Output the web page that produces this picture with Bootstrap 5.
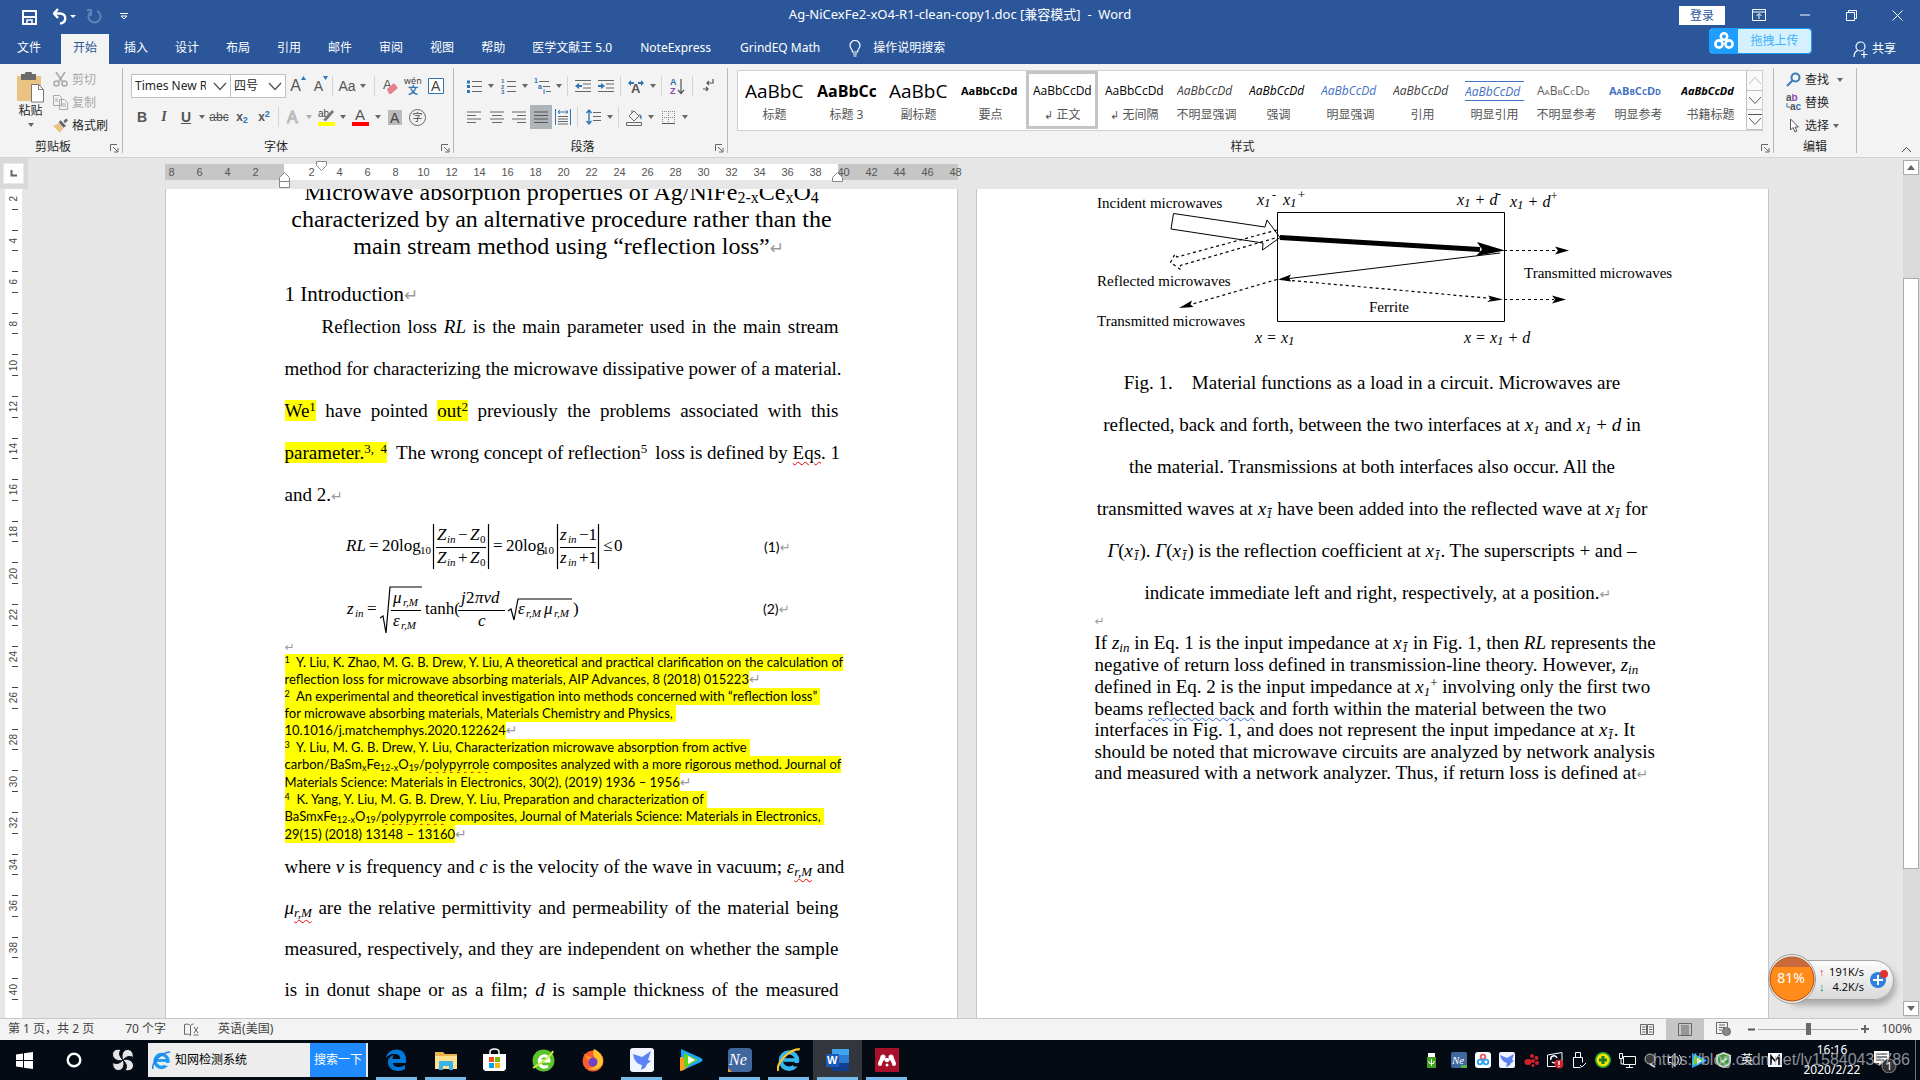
<!DOCTYPE html>
<html lang="zh-CN">
<head>
<meta charset="utf-8">
<meta name="viewport" content="width=device-width, initial-scale=1">
<title>Ag-NiCexFe2-xO4-R1-clean-copy1.doc - Word</title>
<link href="https://cdn.jsdelivr.net/npm/bootstrap@5.3.0/dist/css/bootstrap.min.css" rel="stylesheet">
<style>
:root{--ui:"Noto Sans","Noto Sans CJK SC",sans-serif;--serif:"Liberation Serif","Noto Sans CJK SC",serif;--blue:#2b579a}
body{font:12px/16px var(--ui);color:#262626;background:#e6e6e6}
button,input,select{font:inherit;color:inherit}
button{background:none;border:0;padding:0}
svg{display:block;flex:none}
.top-blue{background:var(--blue);color:#fff}
.titlebar{height:34px}
.qat{padding-left:22px}
.doc-name{left:0;right:0;top:6px;pointer-events:none;font-size:13px}
.login{background:#fff;color:var(--blue);width:46px;height:19px;margin:6px 11px 0 0}
.win-btn{width:46px;height:30px}
.tab-row{height:30px;gap:3px}
.tab-row .tab-btn{height:30px;padding:0 12px 2px}
.tab-row .lat{padding:0 13px 2px}
.tab-row .file-btn{width:58px;padding:0 0 2px 17px;text-align:left}
.tab-row .on{background:#f3f3f3;color:var(--blue)}
.upload{right:108px;top:28px;width:103px;height:26px;border:1px solid #1b9bff;border-radius:4px;background:#d5f1ff;color:#3fb2fb;overflow:hidden;z-index:3}
.upload-logo{width:28px;background:#1e9fff}
.ribbon{height:94px;background:#f3f3f3;border-bottom:1px solid #d2d2d2;padding:4px 0}
.grp{border-right:1px solid #b8b8b8;position:relative;flex:none}
.grp-label{height:16px;line-height:20px;text-align:center}
.launch{position:absolute;right:3px;bottom:0}
.g-clip{width:123px}.g-font{width:331px}.g-para{width:274px}.g-style{flex:1 1 auto;min-width:0}.g-edit{width:83px}.g-end{width:63px}
.trow{height:24px;display:flex;align-items:center}
.g-clip .trow,.g-edit .trow{height:23px}
.row-top{margin:6px 0 7px}
.ic{display:flex;align-items:center;justify-content:center;height:24px;flex:none}
.ic svg{overflow:visible}
.w10{width:10px}.w12{width:12px}.w22{width:22px}.w24{width:24px}.w38{width:38px}
.vs{width:1px;height:20px;background:#d4d4d4;flex:none;margin:0 3px}
.dd::after{content:"";display:block;border:3px solid transparent;border-top:4px solid #666;border-bottom:0}
.dim{color:#a9a9a9}
.sel-wrap{position:relative;border:1px solid #c0c0c0;height:24px;background:#fff}
.sel-wrap+.sel-wrap{border-left:0}
.sel-font{width:100px}.sel-size{width:55px}
.sel-wrap select{appearance:none;border:0;background:transparent;width:100%;height:22px;padding:0 24px 0 3px}
.sel-wrap svg{position:absolute;right:3px;top:7px;pointer-events:none}
.fnt{font-family:"Liberation Sans","Noto Sans CJK SC",sans-serif;color:#555}
.f14{font-size:14px}
.f-ital{font:italic 700 14px "Liberation Serif",serif;color:#555}
.c-acc{color:#2f74b5}
.gallery{border:1px solid #d0d0d0;background:#fff;height:61px;margin:2px 10px 0 9px}
.sty{width:72px;flex:0 0 72px;height:58px;border:3px solid transparent;padding:0 3px 2px 4px;overflow:hidden;text-align:center;color:#555}
.sty.on{border-color:#c5c5c5}
.sty b,.sty i,.sty span{display:block;height:30px;line-height:34px;white-space:nowrap;overflow:hidden;font-family:"Open Sans","Noto Sans",sans-serif;text-align:left;color:#000;font-size:12px;font-weight:400}
.sty b{font-weight:700}.sty .big{font-size:19px}.sty .mid{font-size:16px}.sty b.tight{font-size:11px}
.sty .c-b{color:#4472c4}.sty .c-g{color:#404040}.sty .c-l{color:#5a5a5a}
.sty .ruled{border-top:1px solid #4472c4;border-bottom:1px solid #4472c4;height:20px;line-height:20px;margin:7px 0 3px}
.sty .caps{font-variant:small-caps}
.sty em{display:block;font-style:normal;line-height:21px;margin:0 -6px;white-space:nowrap}
.gal-scroll{width:16px;flex:none}
.gal-scroll button{display:flex;align-items:center;justify-content:center;flex:1;border-left:1px solid #c0c0c0;border-bottom:1px solid #c0c0c0;background:#fafafa}
.work{flex:1 1 auto;min-height:0;position:relative;overflow:hidden}
.vr-col{width:30px;flex:none}
.corner{width:28px;height:31px;background:#d9d9d9;padding:5px 4px 5px 3px;flex:none}
.corner button{width:21px;height:21px;background:#fdfdfd;border:1px solid #e8e8e8}
.vruler{margin-left:5px;width:17px;background:#fff;overflow:hidden;flex:1 1 auto;min-height:0}
.vtrack{margin-top:-11px;height:calc(100% + 3px)}
.vnum{flex:1 1 0;border:0;display:flex;flex-direction:column;align-items:center;justify-content:center;font:10px/10px "Liberation Sans",sans-serif;color:#444;position:relative}
.vnum span{writing-mode:vertical-rl;transform:rotate(180deg)}
.vnum::before,.vnum::after{content:"";position:absolute;left:7px;width:6px;height:1px;background:#444}
.vnum::before{top:10px}.vnum::after{bottom:10px}
.pages{flex:1 1 auto;gap:18px;min-width:0}
.pcol{width:793px;flex:none}
.hr-strip{height:31px;flex:none;position:relative}
.hruler{position:absolute;top:6px;left:0;width:793px;height:16px;background:linear-gradient(90deg,#c6c6c6 119px,#fff 119px,#fff 673px,#c6c6c6 673px)}
.hnums{display:flex;margin-left:-7px;font:11px/16px "Liberation Sans",sans-serif;color:#555}
.hnums span{flex:0 0 28px;text-align:center}
.hm{position:absolute}
.hm-indent{left:151px;top:3px}.hm-left{left:114px;top:14px}.hm-right{left:667px;top:14px}
.paper{flex:1 1 auto;min-height:0;overflow:hidden;background:#fff;border:1px solid #c6c6c6;border-width:0 1px;padding:0 118px;font-family:var(--serif);color:#000}
.paper.first{padding-left:119px}
.scrolled{margin-top:-10px}
.paper sub{font-size:13px}.paper sup{font-size:13px;top:-6px}
.h-title{font-size:24px;line-height:27px;text-align:center;margin:0;font-weight:400}
.h-title sub{font-size:16px;bottom:-3px}
.h-sec{font-size:21px;line-height:24px;margin:22px 0 0;font-weight:400}
.ln{display:block;white-space:nowrap}
.jl{text-align:justify;text-align-last:justify}
.body42,.body41,.body22{font-size:19px;margin:0}
.body42{line-height:42px}.body41{line-height:41px}.body22{line-height:21px}
.body22 .tall{line-height:22px}
.indent{padding-left:37px}
.pm{display:inline-block;width:0;color:#9a9a9a;font:14px/12px "DejaVu Sans",sans-serif;font-style:normal}
.h-title .pm,.h-sec .pm{font-size:17px}
.pm-line{line-height:14px}
.pm-line .pm{font-size:12px}
.yl{background:#ff0}
.notes{font:13px/17px Lato,"Noto Sans",sans-serif;margin-bottom:3px}
.notes .yl{display:inline-block;padding-right:3px}
.notes .n18{line-height:18px}
.notes sup,.notes sub{font-size:9px}
.notes sup{top:-4px}
.sq{text-decoration:underline wavy #e00 1px;text-underline-offset:2px}
.sq-b{text-decoration:underline wavy #2a66e8 1px;text-underline-offset:2px}
.paper .ov{margin-left:-5px;top:-3px;font-size:15px}
.fig-cap{text-align:center}
.vscroll{width:17px;flex:none;background:#dadada;margin-top:2px;padding:0 1px 2px 0}
.vscroll button{height:15px;background:#fff;border:1px solid #ababab;display:flex;align-items:center;justify-content:center}
.vthumb{margin-top:103px;flex:0 0 69%;background:#fff;border:1px solid #ababab}
.status{height:22px;background:#f3f3f3;border-top:1px solid #c8c8c8;color:#444;padding:0 0 1px 8px}
.words{margin-left:31px}.proof{margin:0 18px}
.zoom-out{margin-left:6px}
.view{width:38px;height:21px;display:flex;align-items:center;justify-content:center}
.view.on{background:#c6c6c6}
.zoomer{appearance:none;width:100px;height:16px;background:linear-gradient(#aaa,#aaa) center/100% 1px no-repeat;margin:0 3px}
.zoomer::-webkit-slider-thumb{appearance:none;width:5px;height:12px;background:#6a6a6a}
.task{height:40px;background:#050b14;color:#fff}
.t-search{width:220px;height:34px;background:#ededed;color:#000;margin:0 4px 0 1px}
.t-search input{border:0;background:transparent;width:139px;padding:0 0 0 4px;outline:0}
.t-search button{width:56px;background:#1f8bff;color:#fff;height:34px}
.app{width:49px;height:40px;display:flex;align-items:center;justify-content:center;position:relative}
.app.run::after{content:"";position:absolute;left:4px;right:4px;bottom:0;height:3px;background:#76b9ed}
.app.act{background:#33373d}
.tr{width:24px;display:flex;justify-content:center;align-items:center}
.clock{width:82px;text-align:center;line-height:20px}
.wmark{right:10px;bottom:10px;font:16px/20px "Liberation Sans",sans-serif;color:#b9bcc0;opacity:.75}
.speed{left:1768px;bottom:76px;height:50px;z-index:4;color:#000;padding-top:6px}
.pill{width:104px;height:40px;margin-left:22px;border:1px solid #a5a5a5;border-radius:0 20px 20px 0;background:linear-gradient(#fcfcfc,#d9d9d9);box-shadow:2px 5px 6px #0004;padding:3px 29px 0 0;font:11px/15px "Open Sans","Noto Sans",sans-serif;text-align:right}
.pill .arr{float:left;padding-left:28px;font-weight:700}
.ball{position:absolute;left:0;top:0}
.plus{position:absolute;right:5px;top:15px}
</style>
<script src="https://cdn.jsdelivr.net/npm/bootstrap@5.3.0/dist/js/bootstrap.bundle.min.js"></script>
</head>
<body class="vh-100 overflow-hidden d-flex flex-column m-0">
<header class="top-blue position-relative flex-shrink-0">
  <div class="titlebar d-flex align-items-start justify-content-between">
    <div class="qat d-flex align-items-center pt-2">
      <button aria-label="保存"><svg width="15" height="16" viewBox="0 0 15 16" fill="none" stroke="#fff" stroke-width="2"><path d="M1 2h13v13H1zM2 8h11"/><path d="M5 15v-4h5v4" stroke-width="1.5"/></svg></button>
      <button class="ms-3" aria-label="撤消"><svg width="26" height="17" viewBox="0 0 26 17" fill="none" stroke="#fff" stroke-width="2.4"><path d="M5 1L1 5.500 5 10M1 5.500h6c7 0 7 9 0 10"/><path d="M17 7h6l-3 3z" fill="#fff" stroke="none"/></svg></button>
      <button class="ms-2" aria-label="恢复"><svg width="16" height="17" viewBox="0 0 16 17" fill="none" stroke="#5f82b8" stroke-width="2"><path d="M10 3a6 6 0 1 1-5 0M4 8V2H0"/></svg></button>
      <button class="ms-3" aria-label="自定义快速访问工具栏"><svg width="10" height="9" viewBox="0 0 10 9" fill="none" stroke="#fff"><path d="M1 1.500h8M2 4l3 3 3-3z"/></svg></button>
    </div>
    <div class="doc-name position-absolute text-center">Ag-NiCexFe2-xO4-R1-clean-copy1.doc [兼容模式]&nbsp; -&nbsp; Word</div>
    <div class="d-flex">
      <button class="login position-relative">登录</button>
      <button class="win-btn d-flex align-items-center justify-content-center" aria-label="功能区显示选项"><svg width="14" height="12" viewBox="0 0 14 12" fill="none" stroke="#fff"><path d="M.5.5h13v11H.5zM.5 3h13M7 10V5M4.500 7L7 4.500 9.500 7"/></svg></button>
      <button class="win-btn d-flex align-items-center justify-content-center" aria-label="最小化"><svg width="10" height="2"><path d="M0 1h10" stroke="#fff"/></svg></button>
      <button class="win-btn d-flex align-items-center justify-content-center" aria-label="还原"><svg width="11" height="11" fill="none" stroke="#fff"><path d="M.5 2.500h8v8h-8zM2.500 2V.5h8v8H9"/></svg></button>
      <button class="win-btn d-flex align-items-center justify-content-center" aria-label="关闭"><svg width="11" height="11" stroke="#fff"><path d="M.5.5l10 10M10.500.5l-10 10"/></svg></button>
    </div>
  </div>
  <nav class="tab-row d-flex align-items-center">
    <button class="file-btn tab-btn">文件</button><button class="tab-btn on">开始</button><button class="tab-btn">插入</button><button class="tab-btn">设计</button><button class="tab-btn">布局</button><button class="tab-btn">引用</button><button class="tab-btn">邮件</button><button class="tab-btn">审阅</button><button class="tab-btn">视图</button><button class="tab-btn">帮助</button><button class="tab-btn">医学文献王 5.0</button><button class="tab-btn lat">NoteExpress</button><button class="tab-btn lat">GrindEQ Math</button>
    <button class="tab-btn lat d-flex align-items-center gap-2"><svg class="me-1" width="12" height="17" viewBox="0 0 12 17" fill="none" stroke="#fff" stroke-width="1.200"><path d="M3.500 12c0-3-2.500-3.500-2.500-6.500a5 5 0 0 1 10 0c0 3-2.500 3.500-2.500 6.500zM4 14h4M4.500 16h3"/></svg>操作说明搜索</button>
    <button class="ms-auto me-4 d-flex align-items-center gap-1"><svg width="15" height="17" viewBox="0 0 15 17" fill="none" stroke="#fff" stroke-width="1.200"><circle cx="7.500" cy="5.500" r="4.500"/><path d="M1 16c0-4 2-6 4-6.500M11 10v7M8 13.500h6.500"/></svg>共享</button>
  </nav>
  <button class="upload position-absolute d-flex p-0"><span class="upload-logo h-100 d-flex align-items-center justify-content-center"><svg width="20" height="18" viewBox="0 0 20 18" fill="none" stroke="#fff" stroke-width="2.600"><circle cx="10" cy="4.500" r="3.200"/><circle cx="5" cy="12" r="3.600"/><circle cx="15" cy="12" r="3.600"/></svg></span><span class="flex-fill align-self-center">拖拽上传</span></button>
</header>

<section class="ribbon d-flex flex-shrink-0">
  <div class="grp g-clip d-flex flex-column justify-content-between">
    <div class="d-flex">
      <button class="d-flex flex-column align-items-center ms-3 pt-1"><svg width="29" height="31" viewBox="0 0 29 31"><path d="M1 4h24v25H1z" fill="#eac282"/><path d="M5 2h4a3.500 3.500 0 0 1 7 0h4v6H5z" fill="#6a6a6a"/><path d="M15.500 12.500h7l5 5v12.500h-12z" fill="#fff" stroke="#777"/><path d="M22.500 12.500v5h5" fill="none" stroke="#777"/></svg><span>粘贴</span><span class="dd mt-1"></span></button>
      <div class="ms-2 lh-1">
        <button class="trow dim gap-1"><svg width="15" height="15" viewBox="0 0 15 15" fill="none" stroke="#a9a9a9" stroke-width="1.600"><path d="M3 0l6 9M12 0L6 9"/><circle cx="3.500" cy="11.500" r="2.500"/><circle cx="11.500" cy="11.500" r="2.500"/></svg>剪切</button>
        <button class="trow dim gap-1"><svg width="15" height="15" viewBox="0 0 15 15" fill="#f3f3f3" stroke="#a9a9a9"><path d="M.5.5h6l2 2v8h-8zM6.500 4.500h5l3 3v7h-8zM2 4h3M2 6h3M8 9h5M8 11h5"/></svg>复制</button>
        <button class="trow gap-1"><svg width="15" height="15" viewBox="0 0 16 15"><path d="M0 8l6-3 5 6-4 4z" fill="#eac282"/><path d="M6 4l2-2 6 6-3 2zM11 3l3-3 2 2-3 3z" fill="#666"/></svg>格式刷</button>
      </div>
    </div>
    <div class="grp-label me-3">剪贴板</div>
    <svg class="launch" width="9" height="9" fill="none" stroke="#666"><path d="M.5 7V.5H7M3 3l4.500 4.500M8 4v4H4"/></svg>
  </div>

  <div class="grp g-font d-flex flex-column justify-content-between">
    <div>
    <div class="trow row-top ps-2">
      <div class="sel-wrap sel-font"><select aria-label="字体"><option>Times New Roman</option></select><svg width="14" height="9" fill="none" stroke="#555" stroke-width="1.300"><path d="M1 1l6 6.500L13 1"/></svg></div>
      <div class="sel-wrap sel-size"><select aria-label="字号"><option>四号</option></select><svg width="14" height="9" fill="none" stroke="#555" stroke-width="1.300"><path d="M1 1l6 6.500L13 1"/></svg></div>
      <button class="ic w24 fnt fs-6">A<svg class="mb-3" width="5" height="4"><path d="M0 4l2.500-4L5 4z" fill="#2f74b5"/></svg></button>
      <button class="ic w22 fnt f14">A<svg class="mb-3" width="5" height="4"><path d="M0 0h5L2.500 4z" fill="#2f74b5"/></svg></button>
      <span class="vs mx-0"></span>
      <button class="ic w38 fnt dd gap-1 f14">Aa</button>
      <span class="vs"></span>
      <button class="ic w24"><svg width="15" height="17" viewBox="0 0 15 17"><text x="0" y="11" font-size="13" fill="#555" font-family="Liberation Sans">A</text><path d="M4 11l7-6 4 5-7 6H6z" fill="#e8818f"/></svg></button>
      <button class="ic w22"><svg width="18" height="18" viewBox="0 0 18 18"><text x="0" y="7" font-size="9" fill="#444" font-family="Noto Sans">wén</text><text x="4" y="17" font-size="10" font-weight="700" fill="#2f74b5" font-family="Noto Sans CJK SC">文</text></svg></button>
      <button class="ic w24"><svg width="16" height="16" viewBox="0 0 16 16"><path d="M.5.5h15v15H.5z" fill="#fff" stroke="#2f74b5"/><text x="3" y="13" font-size="14" fill="#444" font-family="Liberation Sans">A</text></svg></button>
    </div>
    <div class="trow ps-2">
      <button class="ic w22 fnt f14 fw-bold">B</button>
      <button class="ic w22 f-ital">I</button>
      <button class="ic w22 fnt f14 fw-bold text-decoration-underline">U</button><span class="ic w10 dd"></span>
      <button class="ic w24 fnt text-decoration-line-through">abc</button>
      <button class="ic w22 fnt fw-bold"><span>x<sub class="c-acc">2</sub></span></button>
      <button class="ic w22 fnt fw-bold"><span>x<sup class="c-acc">2</sup></span></button>
      <span class="vs"></span>
      <button class="ic w22"><svg width="16" height="16"><text x="2" y="14" font-size="16" fill="#fff" stroke="#bbb" stroke-width="1.200" font-family="Liberation Sans">A</text></svg></button><span class="ic w10 dd opacity-50"></span>
      <button class="ic w24"><svg width="17" height="18" viewBox="0 0 17 18"><text x="0" y="9" font-size="10" fill="#444" font-family="Liberation Sans">ab</text><path d="M5 12l9-10 2 2-8 9z" fill="#777"/><path d="M0 14h17v4H0z" fill="#ff0"/></svg></button><span class="ic w10 dd"></span>
      <button class="ic w24"><svg width="17" height="18" viewBox="0 0 17 18"><text x="3" y="12" font-size="15" fill="#555" font-family="Liberation Sans">A</text><path d="M0 14h17v4H0z" fill="red"/></svg></button><span class="ic w12 dd"></span>
      <button class="ic w22"><svg width="14" height="15"><path d="M0 0h14v15H0z" fill="#bbb"/><text x="2" y="13" font-size="14" fill="#444" font-family="Liberation Sans">A</text></svg></button>
      <button class="ic w22"><svg width="17" height="17"><circle cx="8.500" cy="8.500" r="8" fill="none" stroke="#666"/><text x="3.500" y="12" font-size="10" fill="#444" font-family="Noto Sans CJK SC">字</text></svg></button>
    </div>
    </div>
    <div class="grp-label pe-4">字体</div>
    <svg class="launch" width="9" height="9" fill="none" stroke="#666"><path d="M.5 7V.5H7M3 3l4.500 4.500M8 4v4H4"/></svg>
  </div>

  <div class="grp g-para d-flex flex-column justify-content-between">
    <div>
    <div class="trow row-top ps-2">
      <button class="ic w24"><svg width="15" height="15"><path d="M5 2.500h10M5 7.500h10M5 12.500h10" stroke="#666"/><path d="M0 1.500h3v3H0zM0 6h3v3H0zM0 11h3v3H0z" fill="#2f74b5"/></svg></button><span class="ic w10 dd"></span>
      <button class="ic w24"><svg width="15" height="17"><path d="M6 3.500h9M6 8.500h9M6 13.500h9" stroke="#666"/><g font-size="6" font-weight="700" fill="#2f74b5" font-family="Liberation Sans"><text y="5">1</text><text y="11">2</text><text y="16">3</text></g></svg></button><span class="ic w10 dd"></span>
      <button class="ic w24"><svg width="17" height="17"><path d="M5 3.500h10M9 8.500h7M12 13.500h5" stroke="#666"/><g font-size="7" font-weight="700" fill="#2f74b5" font-family="Liberation Sans"><text y="5">1</text><text x="4" y="11">a</text><text x="9" y="16">i</text></g></svg></button><span class="ic w10 dd"></span>
      <span class="vs"></span>
      <button class="ic w24"><svg width="16" height="14"><path d="M0 1.500h16M8 5h8M8 9h8M0 12.500h16" stroke="#666"/><path d="M0 7l4-3v2h3v2H4v2z" fill="#2f74b5"/></svg></button>
      <button class="ic w22"><svg width="16" height="14"><path d="M0 1.500h16M8 5h8M8 9h8M0 12.500h16" stroke="#666"/><path d="M7 7L3 4v2H0v2h3v2z" fill="#2f74b5"/></svg></button>
      <span class="vs"></span>
      <button class="ic w24"><svg width="16" height="15"><text x="3" y="14" font-size="13" font-weight="700" fill="#555" font-family="Liberation Sans">A</text><path d="M0 4l3-3v2h3v2H3v2zM16 4l-3-3v2h-3v2h3v2z" fill="#2f74b5"/></svg></button><span class="ic w10 dd"></span>
      <span class="vs"></span>
      <button class="ic w24"><svg width="15" height="17"><g font-size="9" font-weight="700" font-family="Liberation Sans"><text y="7" fill="#2f74b5">A</text><text y="16" fill="#8a4bb0">Z</text></g><path d="M11 1v14M8 12l3 3.500L14 12" fill="none" stroke="#555" stroke-width="1.200"/></svg></button>
      <span class="vs"></span>
      <button class="ic w24"><svg width="11" height="14" fill="none" stroke="#555" stroke-width="1.200"><path d="M10 0v4H4M6 2L4 4l2 2M0 10h5M3 8l2 2-2 2"/></svg></button>
    </div>
    <div class="trow ps-2">
      <button class="ic w24"><svg width="14" height="12"><path d="M0 1h14M0 4.500h9M0 8h14M0 11.500h9" stroke="#666"/></svg></button>
      <button class="ic w22"><svg width="14" height="12"><path d="M0 1h14M2 4.500h10M0 8h14M2 11.500h10" stroke="#666"/></svg></button>
      <button class="ic w22"><svg width="14" height="12"><path d="M0 1h14M5 4.500h9M0 8h14M5 11.500h9" stroke="#666"/></svg></button>
      <button class="ic w22 bg-secondary bg-opacity-50"><svg width="14" height="12"><path d="M0 1h14M0 4.500h14M0 8h14M0 11.500h14" stroke="#555"/></svg></button>
      <button class="ic w22"><svg width="16" height="16"><path d="M3 7.500h10M3 10h10M3 12.500h10M3 15h10" stroke="#666"/><path d="M.5 0v16M15.500 0v16M3 3h10M5 1L3 3l2 2M11 1l2 2-2 2" stroke="#2f74b5" fill="none"/></svg></button>
      <span class="vs"></span>
      <button class="ic w24"><svg width="15" height="16"><path d="M7 3.500h8M7 7.500h8M7 11.500h8" stroke="#666"/><path d="M3 1v14M.5 4L3 1l2.500 3M.5 12L3 15l2.500-3" stroke="#2f74b5" fill="none" stroke-width="1.400"/></svg></button><span class="ic w10 dd"></span>
      <span class="vs"></span>
      <button class="ic w24"><svg width="17" height="17" fill="none" stroke="#666"><path d="M3 7l5-5 5 5-5 5zM6 4V1"/><path d="M13 5c3 1 3 4 2 6z" fill="#2f74b5" stroke="none"/><path d="M.5 13.500h15v3H.5z"/></svg></button><span class="ic w10 dd"></span>
      <button class="ic w24"><svg width="13" height="13"><path d="M.5 0v12M6.500 0v12M12.500 0v12M0 .5h13M0 6.500h13" stroke="#888" stroke-dasharray="1 1"/><path d="M0 12.500h13" stroke="#555"/></svg></button><span class="ic w10 dd"></span>
    </div>
    </div>
    <div class="grp-label pe-3">段落</div>
    <svg class="launch" width="9" height="9" fill="none" stroke="#666"><path d="M.5 7V.5H7M3 3l4.500 4.500M8 4v4H4"/></svg>
  </div>

  <div class="grp g-style d-flex flex-column justify-content-between">
    <div class="gallery d-flex justify-content-between">
      <div class="d-flex overflow-hidden">
        <button class="sty"><span class="big">AaBbC</span><em>标题</em></button>
        <button class="sty"><b class="mid">AaBbCc</b><em>标题 3</em></button>
        <button class="sty"><span class="big">AaBbC</span><em>副标题</em></button>
        <button class="sty"><b class="tight">AaBbCcDd</b><em>要点</em></button>
        <button class="sty on"><span>AaBbCcDd</span><em><small>↲</small> 正文</em></button>
        <button class="sty"><span>AaBbCcDd</span><em><small>↲</small> 无间隔</em></button>
        <button class="sty"><i class="c-g">AaBbCcDd</i><em>不明显强调</em></button>
        <button class="sty"><i>AaBbCcDd</i><em>强调</em></button>
        <button class="sty"><i class="c-b">AaBbCcDd</i><em>明显强调</em></button>
        <button class="sty"><i class="c-g">AaBbCcDd</i><em>引用</em></button>
        <button class="sty"><i class="c-b ruled">AaBbCcDd</i><em>明显引用</em></button>
        <button class="sty"><span class="c-l caps">AaBbCcDd</span><em>不明显参考</em></button>
        <button class="sty"><b class="c-b caps tight">AaBbCcDd</b><em>明显参考</em></button>
        <button class="sty"><b class="fst-italic tight">AaBbCcDd</b><em>书籍标题</em></button>
      </div>
      <div class="gal-scroll d-flex flex-column">
        <button aria-label="上一行"><svg width="14" height="9" fill="none" stroke="#bbb"><path d="M1 8l6-6.500L13 8"/></svg></button>
        <button aria-label="下一行"><svg width="14" height="9" fill="none" stroke="#555"><path d="M1 1l6 6.500L13 1"/></svg></button>
        <button aria-label="其他"><svg width="14" height="12" fill="none" stroke="#555"><path d="M0 .5h14M1 4l6 6.500L13 4"/></svg></button>
      </div>
    </div>
    <div class="grp-label pe-3">样式</div>
    <svg class="launch" width="9" height="9" fill="none" stroke="#666"><path d="M.5 7V.5H7M3 3l4.500 4.500M8 4v4H4"/></svg>
  </div>

  <div class="grp g-edit d-flex flex-column justify-content-between">
    <div class="ps-2 ms-1">
      <button class="trow gap-1"><svg width="15" height="15" fill="none" stroke="#3a78b8" stroke-width="2"><circle cx="9.500" cy="5.500" r="4"/><path d="M6.500 8.500L1 14"/></svg>查找<span class="dd ms-1"></span></button>
      <button class="trow gap-1"><svg width="15" height="17" font-family="Liberation Sans" font-size="10" font-weight="700"><text y="7" fill="#555">a<tspan fill="#8a4bb0">b</tspan></text><text x="4" y="16" fill="#555">a<tspan fill="#2f74b5">c</tspan></text><path d="M1 9v4h3" fill="none" stroke="#2f74b5"/></svg>替换</button>
      <button class="trow gap-1"><svg width="15" height="15" fill="#fff" stroke="#555"><path d="M4.500 1v11l2.500-2.500 2 4.500 2-1-2-4h3.500z"/></svg>选择<span class="dd"></span></button>
    </div>
    <div class="grp-label">编辑</div>
  </div>
  <div class="g-end d-flex align-items-end justify-content-end pe-2 flex-shrink-0"><button aria-label="折叠功能区"><svg width="11" height="7" fill="none" stroke="#444"><path d="M1 6l4.500-4.500L10 6"/></svg></button></div>
</section>

<main class="work d-flex">
  <div class="vr-col d-flex flex-column">
    <div class="corner"><button class="d-flex align-items-center justify-content-center" aria-label="制表符"><svg width="7" height="7"><path d="M1.500 0v5.500H7" fill="none" stroke="#666" stroke-width="2"/></svg></button></div>
    <div class="vruler"><div class="vtrack d-flex flex-column">
      <div class="vnum"><span>2</span></div><div class="vnum"><span>4</span></div><div class="vnum"><span>6</span></div><div class="vnum"><span>8</span></div><div class="vnum"><span>10</span></div><div class="vnum"><span>12</span></div><div class="vnum"><span>14</span></div><div class="vnum"><span>16</span></div><div class="vnum"><span>18</span></div><div class="vnum"><span>20</span></div><div class="vnum"><span>22</span></div><div class="vnum"><span>24</span></div><div class="vnum"><span>26</span></div><div class="vnum"><span>28</span></div><div class="vnum"><span>30</span></div><div class="vnum"><span>32</span></div><div class="vnum"><span>34</span></div><div class="vnum"><span>36</span></div><div class="vnum"><span>38</span></div><div class="vnum"><span>40</span></div>
    </div></div>
  </div>

  <div class="pages d-flex justify-content-center">
    <div class="pcol d-flex flex-column">
      <div class="hr-strip"><div class="hruler"><div class="hnums"><span>8</span><span>6</span><span>4</span><span>2</span><span></span><span>2</span><span>4</span><span>6</span><span>8</span><span>10</span><span>12</span><span>14</span><span>16</span><span>18</span><span>20</span><span>22</span><span>24</span><span>26</span><span>28</span><span>30</span><span>32</span><span>34</span><span>36</span><span>38</span><span>40</span><span>42</span><span>44</span><span>46</span><span>48</span></div></div>
        <svg class="hm hm-indent" width="11" height="10" fill="#fff" stroke="#888"><path d="M.5.5h10v4l-5 5-5-5z"/></svg>
        <svg class="hm hm-left" width="11" height="17" fill="#fff" stroke="#888"><path d="M.5 9.500v-4l5-5 5 5v4zM.5 9.500h10v6H.5z"/></svg>
        <svg class="hm hm-right" width="11" height="11" fill="#fff" stroke="#888"><path d="M.5 9.500v-4l5-5 5 5v4z"/></svg>
      </div>
      <article class="paper first"><div class="scrolled">
        <h1 class="h-title"><span class="ln">Microwave absorption properties of Ag/NiFe<sub>2-x</sub>Ce<sub>x</sub>O<sub>4</sub></span><span class="ln">characterized by an alternative procedure rather than the</span><span class="ln">main stream method using “reflection loss”<span class="pm">↵</span></span></h1>
        <h2 class="h-sec">1 Introduction<span class="pm">↵</span></h2>
        <p class="body42"><span class="ln jl indent">Reflection loss <i>RL</i> is the main parameter used in the main stream</span><span class="ln jl">method for characterizing the microwave dissipative power of a material.</span><span class="ln jl"><span class="yl">We<sup>1</sup></span> have pointed <span class="yl">out<sup>2</sup></span> previously the problems associated with this</span><span class="ln jl"><span class="yl">parameter.<sup>3,&nbsp; 4</sup></span>&nbsp; The wrong concept of reflection<sup>5&nbsp;</sup> loss is defined by <span class="sq">Eqs</span>. 1</span><span class="ln">and 2.<span class="pm">↵</span></span></p>
        <svg width="554" height="124" viewBox="0 5 554 124" font-family="Liberation Serif, serif" font-size="17" fill="#000" stroke="none">
          <g font-style="italic"><text x="61" y="40">RL</text><text x="152" y="29">Z</text><text x="185" y="29">Z</text><text x="152" y="52">Z</text><text x="185" y="52">Z</text><text x="275" y="29">z</text><text x="275" y="52">z</text><text x="62" y="103">z</text><text x="108" y="92">μ</text><text x="108" y="115">ε</text><text x="176" y="92">j</text><text x="190" y="92">πνd</text><text x="193" y="115">c</text><text x="233" y="103">ε</text><text x="259" y="103">μ</text></g>
          <g><text x="84" y="40">=</text><text x="97" y="40">20log</text><text x="173" y="29">−</text><text x="173" y="52">+</text><text x="208" y="40">=</text><text x="221" y="40">20log</text><text x="294" y="29">−1</text><text x="294" y="52">+1</text><text x="318" y="40">≤</text><text x="329" y="40">0</text><text x="82" y="103">=</text><text x="140" y="103">tanh(</text><text x="181" y="92">2</text><text x="288" y="103">)</text></g>
          <g font-size="11"><text x="135" y="43">10</text><text x="195" y="32">0</text><text x="195" y="55">0</text><text x="258" y="43">10</text><g font-style="italic"><text x="162" y="32">in</text><text x="162" y="55">in</text><text x="283" y="32">in</text><text x="283" y="55">in</text><text x="70" y="106">in</text><text x="118" y="95">r,M</text><text x="116" y="118">r,M</text><text x="241" y="106">r,M</text><text x="269" y="106">r,M</text></g></g>
          <path d="M148.500 13v45M203.500 13v45M272.500 13v45M313.500 13v45M151 36.500h50M275 36.500h36M106 99.500h30M173 99.500h47M95 107l3-2 3 17 4-46h32M223 100l3-2 3 11 4-21h54" fill="none" stroke="#000" stroke-width="1.200"/>
          <g font-family="Lato, sans-serif" font-size="14"><text x="479" y="41">(1)</text><text x="478" y="103">(2)</text></g>
          <g font-family="DejaVu Sans" font-size="13" fill="#9a9a9a"><text x="495" y="41">↵</text><text x="494" y="103">↵</text></g>
        </svg>
        <div class="pm-line"><span class="pm">↵</span></div>
        <div class="notes">
          <span class="ln"><span class="yl pe-0"><sup>1</sup>&nbsp; Y. Liu, K. Zhao, M. G. B. Drew, Y. Liu, A theoretical and practical clarification on the calculation of</span></span>
          <span class="ln"><span class="yl pe-0">reflection loss for microwave absorbing materials, AIP Advances, 8 (2018) 015223</span><span class="pm">↵</span></span>
          <span class="ln"><span class="yl"><sup>2</sup>&nbsp; An experimental and theoretical investigation into methods concerned with “reflection loss”</span></span>
          <span class="ln"><span class="yl">for microwave absorbing materials, Materials Chemistry and Physics,</span></span>
          <span class="ln"><span class="yl pe-0">10.1016/j.matchemphys.2020.122624</span><span class="pm">↵</span></span>
          <span class="ln"><span class="yl"><sup>3</sup>&nbsp; Y. Liu, M. G. B. Drew, Y. Liu, Characterization microwave absorption from active</span></span>
          <span class="ln"><span class="yl pe-0">carbon/BaSm<sub>x</sub>Fe<sub>12-x</sub>O<sub>19</sub>/<span class="sq">polypyrrole</span> composites analyzed with a more rigorous method. Journal of</span></span>
          <span class="ln n18"><span class="yl pe-0">Materials Science: Materials in Electronics, 30(2), (2019) 1936 – 1956</span><span class="pm">↵</span></span>
          <span class="ln"><span class="yl"><sup>4</sup>&nbsp; K. Yang, Y. Liu, M. G. B. Drew, Y. Liu, Preparation and characterization of</span></span>
          <span class="ln"><span class="yl">BaSmxFe<sub>12-x</sub>O<sub>19</sub>/<span class="sq">polypyrrole</span> composites, Journal of Materials Science: Materials in Electronics,</span></span>
          <span class="ln n18"><span class="yl pe-0">29(15) (2018) 13148 – 13160</span><span class="pm">↵</span></span>
        </div>
        <p class="body41"><span class="ln jl">where <i>ν</i> is frequency and <i>c</i> is the velocity of the wave in vacuum; <i>ε<sub class="sq">r,M</sub></i> and</span><span class="ln jl"><i>μ<sub class="sq">r,M</sub></i> are the relative permittivity and permeability of the material being</span><span class="ln jl">measured, respectively, and they are independent on whether the sample</span><span class="ln jl">is in donut shape or as a film; <i>d</i> is sample thickness of the measured</span></p>
      </div></article>
    </div>

    <div class="pcol d-flex flex-column">
      <div class="hr-strip"></div>
      <article class="paper">
        <svg class="overflow-visible" width="554" height="173" viewBox="0 0 554 173" font-family="Liberation Serif, serif" font-size="15" fill="#000">
          <text x="2" y="19">Incident microwaves</text><text x="2" y="97">Reflected microwaves</text><text x="2" y="137">Transmitted microwaves</text><text x="429" y="89">Transmitted microwaves</text><text x="274" y="123">Ferrite</text>
          <g font-style="italic" font-size="16"><text x="162" y="16">x<tspan font-size="13" dy="2">1</tspan></text><text x="177" y="10" font-size="12">-</text><text x="188" y="16">x<tspan font-size="13" dy="2">1</tspan></text><text x="202" y="10" font-size="13">+</text>
          <text x="362" y="16">x<tspan font-size="13" dy="2">1</tspan><tspan dy="-2"> + d</tspan></text><text x="402" y="9" font-size="12">-</text>
          <text x="415" y="18">x<tspan font-size="13" dy="2">1</tspan><tspan dy="-2"> + d</tspan></text><text x="455" y="11" font-size="12">+</text>
          <text x="160" y="154">x = x<tspan font-size="13" dy="2">1</tspan></text><text x="369" y="154">x = x<tspan font-size="13" dy="2">1</tspan><tspan dy="-2"> + d</tspan></text></g>
          <g fill="none" stroke="#000"><path d="M182.500 23.500h227v109h-227z"/><path d="M78.500 24.500L170 38l2-7 13 17.500L167.500 61l.5-7L76 40z"/>
          <path d="M185 48.500L385 60.500" stroke-width="5"/><path d="M405 64L190 90"/>
          <path d="M182 41L82 68l-2-3-4.500 8.500 10 7v-4L182 48.500M185 90.500l212 19M409 61.500h52M409 110.500h50M182 90.500L96 115.500" stroke-dasharray="3 3" stroke-width="1.200"/></g>
          <path d="M410 61.500L382 53l5 7.500-6 6.500zM183 90.500l13-5-2 3.500 2 3.500zM408 110.500l-15-4 3 3.500-4 3zM474 61.500l-14-4 3 4-3 4zM471 110.500l-14-4 3 4-3 4zM84 119l13-7.500-1.500 4 3 2.500z"/>
        </svg>
        <p class="body42 fig-cap"><span class="ln">Fig. 1.&nbsp; &nbsp; Material functions as a load in a circuit. Microwaves are</span><span class="ln">reflected, back and forth, between the two interfaces at <i>x<sub>1</sub></i> and <i>x<sub>1</sub></i> + <i>d</i> in</span><span class="ln">the material. Transmissions at both interfaces also occur. All the</span><span class="ln">transmitted waves at <i>x<sub>1</sub></i><sup class="ov">-</sup> have been added into the reflected wave at <i>x<sub>1</sub></i><sup class="ov">-</sup> for</span><span class="ln"><i>Γ</i>(<i>x<sub>1</sub></i><sup class="ov">-</sup>). <i>Γ</i>(<i>x<sub>1</sub></i><sup class="ov">-</sup>) is the reflection coefficient at <i>x<sub>1</sub></i><sup class="ov">-</sup>. The superscripts + and –</span><span class="ln">indicate immediate left and right, respectively, at a position.<span class="pm">↵</span></span></p>
        <div class="pm-line pb-1"><span class="pm">↵</span></div>
        <p class="body22"><span class="ln tall">If <i>z<sub>in</sub></i> in Eq. 1 is the input impedance at <i>x<sub>1</sub></i><sup class="ov">-</sup> in Fig. 1, then <i>RL</i> represents the</span><span class="ln tall">negative of return loss defined in transmission-line theory. However, <i>z<sub>in</sub></i></span><span class="ln tall">defined in Eq. 2 is the input impedance at <i>x<sub>1</sub></i><sup>+</sup> involving only the first two</span><span class="ln">beams <span class="sq-b">reflected back</span> and forth within the material between the two</span><span class="ln tall">interfaces in Fig. 1, and does not represent the input impedance at <i>x<sub>1</sub></i><sup class="ov">-</sup>. It</span><span class="ln">should be noted that microwave circuits are analyzed by network analysis</span><span class="ln">and measured with a network analyzer. Thus, if return loss is defined at<span class="pm">↵</span></span></p>
      </article>
    </div>
  </div>

  <div class="vscroll d-flex flex-column">
    <button aria-label="向上滚动"><svg width="8" height="5"><path d="M0 5l4-5 4 5z" fill="#666"/></svg></button>
    <div class="vthumb"></div>
    <button class="mt-auto" aria-label="向下滚动"><svg width="8" height="5"><path d="M0 0h8L4 5z" fill="#666"/></svg></button>
  </div>
</main>

<footer class="status d-flex align-items-center justify-content-between flex-shrink-0">
  <div class="d-flex align-items-center"><span>第 1 页，共 2 页</span><span class="words">70 个字</span><svg class="proof" width="16" height="13" fill="none" stroke="#666"><path d="M6.500 2.500v10M.5 1.500c3-1 5 0 6 1 1-1 2-1.500 3-1.500M.5 1.500v10c3-1 5 0 6 1M10 4l4 6M14 4l-4 6M9.500 12h5"/></svg><span>英语(美国)</span></div>
  <div class="d-flex align-items-center">
    <button class="view" aria-label="阅读视图"><svg width="14" height="13" fill="none" stroke="#666"><path d="M.5 1.500h6v10h-6zM7.500 1.500h6v10h-6zM2 4h3.500M2 6.500h3.500M2 9h3.500M9 4h3.500M9 6.500h3.500M9 9h3.500"/></svg></button>
    <button class="view on" aria-label="页面视图"><svg width="14" height="13" fill="none" stroke="#666"><path d="M.5.5h13v12H.5zM3 3h8M3 5h8M3 7h8M3 9h8M3 11h8"/></svg></button>
    <button class="view" aria-label="Web 版式视图"><svg width="15" height="14" fill="none" stroke="#666"><path d="M6 11.500H.5V.5h11V5M3 3h6M3 5.500h6M3 8h3"/><circle cx="10.500" cy="9.500" r="4" fill="#888"/></svg></button>
    <button class="zoom-out" aria-label="缩小"><svg width="7" height="3"><path d="M0 1.500h7" stroke="#555" stroke-width="2"/></svg></button>
    <input type="range" class="zoomer" aria-label="缩放" min="10" max="190" value="100">
    <button aria-label="放大"><svg width="8" height="8"><path d="M0 4h8M4 0v8" stroke="#666" stroke-width="2"/></svg></button>
    <span class="ms-2 ps-1 me-2">100%</span>
  </div>
</footer>

<div class="task d-flex align-items-center justify-content-between flex-shrink-0 position-relative">
  <div class="d-flex align-items-center">
    <button class="app" aria-label="开始"><svg width="17" height="17"><path d="M0 2.500l7-1V8H0zM8 1.300L17 0v8H8zM0 9h7v6.500l-7-1zM8 9h9v8l-9-1.300z" fill="#fff"/></svg></button>
    <button class="app" aria-label="Cortana"><svg width="16" height="16"><circle cx="8" cy="8" r="6.300" fill="none" stroke="#fff" stroke-width="2.400"/></svg></button>
    <button class="app" aria-label="搜狗"><svg width="22" height="22" viewBox="0 0 22 22" fill="#e4e4e4" stroke="#050b14"><path d="M11 11C8 13 1 11 0.500 6 0 1 6-1 9 1c-3 3-1 7 2 10z"/><path d="M11 11C9 8 10 1 15 .5c5-.5 7 5 6 8-3-2-7-1-10 2.500z"/><path d="M11 11c3-2 10 0 10.500 5 .5 5-5.500 7-8.500 5 3-3 1-7-2-10z"/><path d="M11 11c2 3 1 10-4 10.500-5 .5-7-5-6-8 3 2 7 1 10-2.500z"/></svg></button>
    <div class="t-search d-flex align-items-center"><svg class="ms-1" width="19" height="19" viewBox="0 0 20 20"><circle cx="10" cy="10.500" r="6.800" fill="none" stroke="#1e9bf5" stroke-width="3.600"/><path d="M4 10h14" stroke="#1e9bf5" stroke-width="3"/><path d="M12 12.500h8v3h-6z" fill="#ededed"/><path d="M1 19C-1 13 10 1 19 1" fill="none" stroke="#1e7de0" stroke-width="1.500"/></svg><input aria-label="搜索" value="知网检测系统"><button>搜索一下</button></div>
    <button class="app run" aria-label="Edge"><svg width="21" height="22" viewBox="0 0 21 22"><path d="M0 9C1-1 20-4 20 11v3H7c0 5 8 5 12 2v4c-6 4-17 2-17-7 0-4 3-6 6-7-1 1-1.500 2-1.500 4H14C15 3 3 4 0 9z" fill="#0078d7"/></svg></button>
    <button class="app run" aria-label="文件资源管理器"><svg width="22" height="19" viewBox="0 0 22 19"><path d="M0 1h8l2 2h12v15H0z" fill="#e9b54a"/><path d="M0 5h22v13H0z" fill="#ffe08e"/><path d="M4 19v-9h14v9h-4v-4H8v4z" fill="#38b2e8"/></svg></button>
    <button class="app" aria-label="应用商店"><svg width="23" height="24" viewBox="0 0 23 24"><path d="M7 7V4c0-4 9-4 9 0v3" fill="none" stroke="#fff" stroke-width="1.500"/><path d="M0 6h23v15l-2 2H2l-2-2z" fill="#fff"/><path d="M6 9h5v5H6z" fill="#f25022"/><path d="M12 9h5v5h-5z" fill="#7fba00"/><path d="M6 15h5v5H6z" fill="#00a4ef"/><path d="M12 15h5v5h-5z" fill="#ffb900"/></svg></button>
    <button class="app" aria-label="浏览器"><svg width="23" height="23"><circle cx="11.500" cy="11.500" r="11" fill="#5cc32c"/><path d="M16 17c-8 4-11-5-7-9 4-3 8 0 8 4H7" fill="none" stroke="#fff" stroke-width="3"/><path d="M1 19C5 16 19 9 21 2" fill="none" stroke="#c8f04a" stroke-width="2"/></svg></button>
    <button class="app" aria-label="Firefox"><svg width="24" height="24" viewBox="0 0 24 24"><circle cx="12" cy="13" r="10.500" fill="#ff5a2d"/><path d="M13 1c7 3 11 10 8 16-3 5-10 6-14 3 8 1 10-5 7-9-1-4-3-5-1-10z" fill="#ffc52e"/><path d="M2 5l4 3 5 1-3 4z" fill="#ff9b22"/><circle cx="12" cy="14" r="4.500" fill="#7240c9"/></svg></button>
    <button class="app run" aria-label="迅雷"><svg width="24" height="24"><rect width="24" height="24" rx="3" fill="#f2f5ff"/><path d="M3 6l9 3 9-6-3 9 3 1-4 3c-1 4-4 5-6 6l1-5c-6-1-8-6-9-11z" fill="#5b83f4"/></svg></button>
    <button class="app" aria-label="腾讯视频"><svg width="24" height="22"><path d="M2 0l20 9c2 1 2 3 0 4L2 22z" fill="#18a8ff"/><path d="M1 8l14 3L5 21l-4 1z" fill="#ff9d1e"/><path d="M5 4l14 7L5 19z" fill="#6bd01b"/><path d="M9 7l7 4-7 4z" fill="#fff"/></svg></button>
    <button class="app run" aria-label="NoteExpress"><svg width="24" height="24"><rect width="24" height="24" rx="4" fill="#41679f"/><path d="M0 20l4 4H0z" fill="#e89b2f"/><text x="1" y="17" font-size="16" font-style="italic" fill="#fff" font-family="Liberation Serif">Ne</text></svg></button>
    <button class="app run" aria-label="Internet Explorer"><svg width="24" height="24" viewBox="0 0 20 20"><circle cx="10" cy="10.500" r="6.800" fill="none" stroke="#35b6ee" stroke-width="3.600"/><path d="M4 10h14" stroke="#35b6ee" stroke-width="3"/><path d="M12 12.500h8v3h-6z" fill="#050b14"/><path d="M1 19C-1 13 10 1 19 1" fill="none" stroke="#f8c62f" stroke-width="1.800"/></svg></button>
    <button class="app run act" aria-label="Word"><svg width="24" height="22"><path d="M6 0h17v22H6z" fill="#2b7cd3"/><path d="M6 0h17v6H6z" fill="#41a5ee"/><path d="M6 14h17v8H6z" fill="#103f91"/><path d="M0 5h13v13H0z" fill="#185abd"/><text x="1" y="15" font-size="11" font-weight="700" fill="#fff" font-family="Liberation Sans">W</text></svg></button>
    <button class="app run" aria-label="Mendeley"><svg width="24" height="24"><path d="M0 0h24v24H0z" fill="#a9112a"/><g fill="#fff"><circle cx="8" cy="9" r="2.500"/><circle cx="16" cy="9" r="2.500"/><circle cx="12" cy="12" r="2.200"/><circle cx="5" cy="16" r="2"/><circle cx="19" cy="16" r="2"/><circle cx="12" cy="17" r="1.500"/><path d="M6 8l-3 7 3 2 3-5 3 2 3-2 3 5 3-2-3-7-6 4z"/></g></svg></button>
  </div>
  <div class="d-flex align-items-center h-100">
    <span class="tr me-1"><svg width="9" height="15"><path d="M1 0h7v4H1z" fill="#fff"/><path d="M0 4h9v11H0z" fill="#3ca31b"/><path d="M4.500 6v7M2 8v2l2.500 1M7 8v2l-2.500 1" stroke="#fff" fill="none"/></svg></span>
    <span class="tr"><svg width="16" height="16"><rect width="16" height="16" rx="2" fill="#41679f"/><path d="M10 13h6v3h-6z" fill="#55b544"/><text x="1" y="12" font-size="11" font-style="italic" fill="#fff" font-family="Liberation Serif">Ne</text></svg></span>
    <span class="tr"><svg width="16" height="16"><rect width="16" height="16" rx="3" fill="#fff"/><g fill="none" stroke-width="1.800"><circle cx="8" cy="5" r="2.300" stroke="#f0585c"/><circle cx="5" cy="10" r="2.300" stroke="#29a4f5"/><circle cx="11" cy="10" r="2.300" stroke="#29a4f5"/></g></svg></span>
    <span class="tr"><svg width="16" height="16"><rect width="16" height="16" rx="2" fill="#f2f5ff"/><path d="M1 3l7 3 7-4-2 6 2 1-3 2c-1 3-3 3-5 4l1-4C4 10 2 7 1 3z" fill="#5b83f4"/></svg></span>
    <span class="tr"><svg width="15" height="13" fill="#d2202c"><ellipse cx="4" cy="8" rx="3.500" ry="3"/><circle cx="9" cy="7" r="2"/><circle cx="8" cy="2" r="2"/><circle cx="12.500" cy="4" r="2"/><circle cx="13" cy="9" r="2"/><circle cx="9" cy="11.500" r="1.500"/></svg></span>
    <span class="tr"><svg width="17" height="17"><path d="M.5 3L15 .5v14H.5z" fill="none" stroke="#fff"/><path d="M4 8a3 3 0 0 1 6-2M10 8a3 3 0 0 1-5 2" stroke="#fff" fill="none" stroke-width="1.500"/><circle cx="12" cy="12" r="4.500" fill="#d2202c"/><path d="M12 9v4M12 14v1" stroke="#fff" stroke-width="1.500"/></svg></span>
    <span class="tr"><svg width="13" height="17" fill="none" stroke="#fff"><path d="M2.500.5h5v5h-5zM7.500 15.500h-7v-10h9v5M7 13l2 2 4-4"/></svg></span>
    <span class="tr"><svg width="16" height="16"><circle cx="8" cy="8" r="8" fill="#19a83b"/><circle cx="8" cy="8" r="6.500" fill="#ffe100"/><path d="M8 4v8M4 8h8" stroke="#157c2a" stroke-width="3"/></svg></span>
    <span class="tr"><svg width="17" height="15" fill="none" stroke="#fff"><path d="M4.500 3.500h12v8h-12zM10.500 12v2M7 14.500h7M.5.5h3v5h-3zM2 6v5h2"/></svg></span>
    <span class="tr"><svg width="14" height="16"><circle cx="6" cy="7" r="5" fill="#3a3a3a" stroke="#bbb"/><path d="M6 12l5 3" stroke="#ddd" stroke-width="2"/></svg></span>
    <span class="tr"><svg width="15" height="14" fill="none" stroke="#fff"><path d="M.5 4.500H3l4-4v13l-4-4H.5zM9 4c2 2 2 4 0 6M11 2c3 3 3 7 0 10"/></svg></span>
    <span class="tr"><svg width="16" height="15"><path d="M1 0l13 6c2 1 2 2 0 3L1 15z" fill="#18a8ff"/><path d="M3 3l10 4-10 5z" fill="#6bd01b"/><path d="M6 5l5 3-5 3z" fill="#fff"/></svg></span>
    <span class="tr"><svg width="15" height="16"><path d="M7.500 0L15 3v6c0 4-4 6-7.500 7C4 15 0 13 0 9V3z" fill="#cfd8cc"/><path d="M7.500 2L13 4v5c0 3-3 4-5.500 5C5 13 2 12 2 9V4z" fill="#3f9c35"/><path d="M5 8l2 2 4-4" stroke="#fff" stroke-width="1.500" fill="none"/></svg></span>
    <span class="tr">英</span>
    <span class="tr mx-1"><svg width="14" height="14"><path d="M0 0h14v14H0z" fill="#fff"/><path d="M3 12V3l4 5 4-5v9" fill="none" stroke="#000" stroke-width="1.600"/></svg></span>
    <span class="clock">16:16<br>2020/2/22</span>
    <button class="me-3" aria-label="通知"><svg width="26" height="26"><path d="M1 4h15v12H9l-3 3v-3H1z" fill="#fff"/><path d="M3 7h11M3 10h11M3 13h8" stroke="#050b14"/><circle cx="16" cy="19" r="7" fill="#333" stroke="#888"/><text x="13" y="23" font-size="11" fill="#fff" font-family="Noto Sans">1</text></svg></button>
    <span class="border-start border-secondary h-100 me-1"></span>
  </div>
  <div class="wmark position-absolute">https://blog.csdn.net/ly15840435786</div>
</div>

<aside class="speed position-absolute">
  <div class="pill"><div><span class="arr text-danger">↑</span>191K/s</div><div><span class="arr text-success">↓</span>4.2K/s</div></div>
  <svg class="ball" width="48" height="50" viewBox="0 0 48 50"><ellipse cx="24" cy="25" rx="23.500" ry="24.500" fill="#ececec" stroke="#9c9c9c"/><circle cx="24" cy="25" r="22" fill="#ff8c1a" stroke="#b3480a"/><path d="M6 13a21.500 21.500 0 0 1 36 0z" fill="#c96a3c"/><text x="23" y="29" text-anchor="middle" font-size="14" fill="#fff" font-family="Noto Sans">81%</text></svg>
  <svg class="plus" width="20" height="20"><circle cx="9" cy="11" r="8" fill="#2f7fe0"/><path d="M9 6v10M4 11h10" stroke="#fff" stroke-width="2"/><circle cx="15" cy="5" r="4" fill="#e03434"/></svg>
</aside>
</body>
</html>
